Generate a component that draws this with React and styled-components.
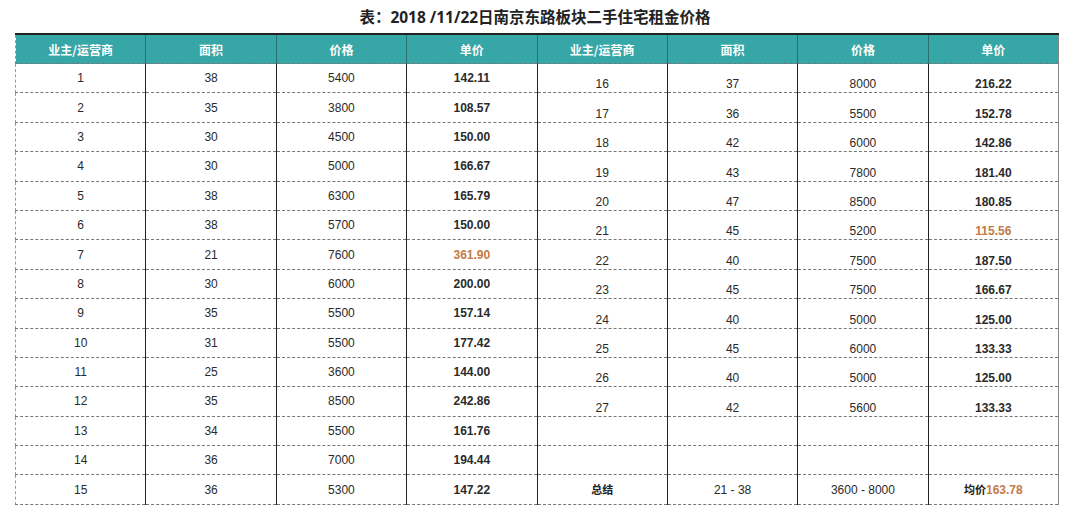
import styled, { createGlobalStyle } from "styled-components";

const GlobalStyle = createGlobalStyle`
  body {
    margin: 0;
    background: #fff;
    font-family: "Liberation Sans", "Noto Sans CJK SC", sans-serif;
  }
`;

const left = [
  [1, 38, 5400, "142.11"],
  [2, 35, 3800, "108.57"],
  [3, 30, 4500, "150.00"],
  [4, 30, 5000, "166.67"],
  [5, 38, 6300, "165.79"],
  [6, 38, 5700, "150.00"],
  [7, 21, 7600, "361.90", true],
  [8, 30, 6000, "200.00"],
  [9, 35, 5500, "157.14"],
  [10, 31, 5500, "177.42"],
  [11, 25, 3600, "144.00"],
  [12, 35, 8500, "242.86"],
  [13, 34, 5500, "161.76"],
  [14, 36, 7000, "194.44"],
  [15, 36, 5300, "147.22"],
];

const right = [
  [16, 37, 8000, "216.22"],
  [17, 36, 5500, "152.78"],
  [18, 42, 6000, "142.86"],
  [19, 43, 7800, "181.40"],
  [20, 47, 8500, "180.85"],
  [21, 45, 5200, "115.56", true],
  [22, 40, 7500, "187.50"],
  [23, 45, 7500, "166.67"],
  [24, 40, 5000, "125.00"],
  [25, 45, 6000, "133.33"],
  [26, 40, 5000, "125.00"],
  [27, 42, 5600, "133.33"],
  null,
  null,
];

const headers = ["业主/运营商", "面积", "价格", "单价"];

const Page = styled.div`
  width: 1080px;
  height: 512px;
  overflow: hidden;
`;

const Title = styled.h1`
  margin: 0;
  height: 33px;
  display: flex;
  align-items: center;
  justify-content: center;
  font-size: 15.5px;
  font-weight: bold;
  color: #222;
  font-family: "Open Sans", "Noto Sans CJK SC", sans-serif;
  padding-right: 10px;
`;

const Table = styled.table`
  margin-left: 15px;
  width: 1044px;
  border-collapse: collapse;
  table-layout: fixed;
`;

const Head = styled.th`
  height: 28px;
  padding: 0;
  background: #36a6a6;
  color: #fff;
  font-size: 12px;
  font-weight: bold;
  font-family: "Noto Sans CJK SC", sans-serif;
  border-top: 2px solid #222;
  border-left: 1px solid #2a6f6f;
  border-bottom: 1px dashed #777;
  &:first-child {
    border-left: 1px dashed #999;
  }
  &:last-child {
    border-right: 1px solid #888;
  }
`;

const Row = styled.tr`
  height: 29.4px;
`;

const Cell = styled.td`
  padding: 0 0 ${({ $bottom }) => ($bottom ? "1px" : "0")};
  text-align: center;
  vertical-align: ${({ $bottom }) => ($bottom ? "bottom" : "middle")};
  font-size: 12px;
  line-height: 14px;
  color: ${({ $hot }) => ($hot ? "#c47a45" : "#2a2a2a")};
  font-weight: ${({ $bold }) => ($bold ? "bold" : "normal")};
  border-left: 1px solid #222;
  border-bottom: 1px dashed #777;
  &:first-child {
    border-left: 1px dashed #999;
  }
  &:last-child {
    border-right: 1px solid #888;
  }
`;

const Label = styled.span`
  font-family: "Noto Sans CJK SC", sans-serif;
  font-weight: bold;
  font-size: 11px;
  color: #222;
`;

const Hot = styled.span`
  color: #c47a45;
  font-weight: bold;
`;

function Half({ item, bottom }) {
  if (!item) {
    return [0, 1, 2, 3].map((i) => <Cell key={i} $bottom={bottom} />);
  }
  const [id, area, price, unit, hot] = item;
  return (
    <>
      <Cell $bottom={bottom}>{id}</Cell>
      <Cell $bottom={bottom}>{area}</Cell>
      <Cell $bottom={bottom}>{price}</Cell>
      <Cell $bottom={bottom} $bold $hot={hot}>
        {unit}
      </Cell>
    </>
  );
}

export default function App() {
  return (
    <Page>
      <GlobalStyle />
      <Title>表：2018 /11/22日南京东路板块二手住宅租金价格</Title>
      <Table>
        <thead>
          <tr>
            {[...headers, ...headers].map((h, i) => (
              <Head key={i}>{h}</Head>
            ))}
          </tr>
        </thead>
        <tbody>
          {left.map((l, i) => (
            <Row key={i}>
              <Half item={l} />
              {i < right.length ? (
                <Half item={right[i]} bottom />
              ) : (
                <>
                  <Cell>
                    <Label>总结</Label>
                  </Cell>
                  <Cell>21 - 38</Cell>
                  <Cell>3600 - 8000</Cell>
                  <Cell>
                    <Label>均价</Label>
                    <Hot>163.78</Hot>
                  </Cell>
                </>
              )}
            </Row>
          ))}
        </tbody>
      </Table>
    </Page>
  );
}
